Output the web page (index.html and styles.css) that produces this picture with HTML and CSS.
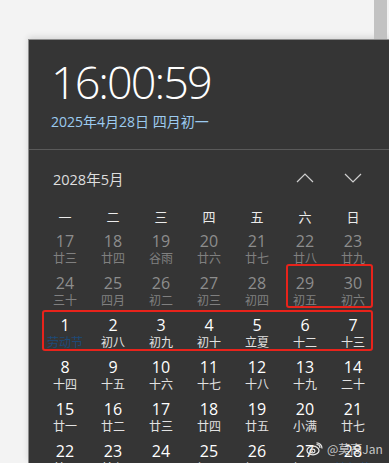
FILE: index.html
```html
<!DOCTYPE html>
<html lang="zh-CN">
<head>
<meta charset="utf-8">
<title>日历</title>
<link rel="stylesheet" href="styles.css">
</head>
<body>
<div class="topbar"><div class="scroll"></div></div>
<div class="panel">
  <div class="clock">
    <div class="time">16:00:59</div>
    <div class="date">2025年4月28日 四月初一</div>
  </div>
  <div class="cal">
    <div class="cal-head">
      <div class="month">2028年5月</div>
      <div class="navs">
        <svg class="nav" width="18" height="10" viewBox="0 0 18 10"><path d="M1 9 L9 1 L17 9" fill="none" stroke="#cfcfcf" stroke-width="1.2"/></svg>
        <svg class="nav" width="18" height="10" viewBox="0 0 18 10"><path d="M1 1 L9 9 L17 1" fill="none" stroke="#cfcfcf" stroke-width="1.2"/></svg>
      </div>
    </div>
    <div class="grid">
      <div class="wd">一</div><div class="wd">二</div><div class="wd">三</div><div class="wd">四</div><div class="wd">五</div><div class="wd">六</div><div class="wd">日</div>

      <div class="day dim"><span class="n">17</span><span class="l">廿三</span></div>
      <div class="day dim"><span class="n">18</span><span class="l">廿四</span></div>
      <div class="day dim"><span class="n">19</span><span class="l">谷雨</span></div>
      <div class="day dim"><span class="n">20</span><span class="l">廿六</span></div>
      <div class="day dim"><span class="n">21</span><span class="l">廿七</span></div>
      <div class="day dim"><span class="n">22</span><span class="l">廿八</span></div>
      <div class="day dim"><span class="n">23</span><span class="l">廿九</span></div>

      <div class="day dim"><span class="n">24</span><span class="l">三十</span></div>
      <div class="day dim"><span class="n">25</span><span class="l">四月</span></div>
      <div class="day dim"><span class="n">26</span><span class="l">初二</span></div>
      <div class="day dim"><span class="n">27</span><span class="l">初三</span></div>
      <div class="day dim"><span class="n">28</span><span class="l">初四</span></div>
      <div class="day dim"><span class="n">29</span><span class="l">初五</span></div>
      <div class="day dim"><span class="n">30</span><span class="l">初六</span></div>

      <div class="day"><span class="n">1</span><span class="l fest">劳动节</span></div>
      <div class="day"><span class="n">2</span><span class="l">初八</span></div>
      <div class="day"><span class="n">3</span><span class="l">初九</span></div>
      <div class="day"><span class="n">4</span><span class="l">初十</span></div>
      <div class="day"><span class="n">5</span><span class="l">立夏</span></div>
      <div class="day"><span class="n">6</span><span class="l">十二</span></div>
      <div class="day"><span class="n">7</span><span class="l">十三</span></div>

      <div class="day"><span class="n">8</span><span class="l">十四</span></div>
      <div class="day"><span class="n">9</span><span class="l">十五</span></div>
      <div class="day"><span class="n">10</span><span class="l">十六</span></div>
      <div class="day"><span class="n">11</span><span class="l">十七</span></div>
      <div class="day"><span class="n">12</span><span class="l">十八</span></div>
      <div class="day"><span class="n">13</span><span class="l">十九</span></div>
      <div class="day"><span class="n">14</span><span class="l">二十</span></div>

      <div class="day"><span class="n">15</span><span class="l">廿一</span></div>
      <div class="day"><span class="n">16</span><span class="l">廿二</span></div>
      <div class="day"><span class="n">17</span><span class="l">廿三</span></div>
      <div class="day"><span class="n">18</span><span class="l">廿四</span></div>
      <div class="day"><span class="n">19</span><span class="l">廿五</span></div>
      <div class="day"><span class="n">20</span><span class="l">小满</span></div>
      <div class="day"><span class="n">21</span><span class="l">廿七</span></div>

      <div class="day"><span class="n">22</span><span class="l">廿八</span></div>
      <div class="day"><span class="n">23</span><span class="l">廿九</span></div>
      <div class="day"><span class="n">24</span><span class="l">五月</span></div>
      <div class="day"><span class="n">25</span><span class="l">初二</span></div>
      <div class="day"><span class="n">26</span><span class="l">初三</span></div>
      <div class="day"><span class="n">27</span><span class="l">初四</span></div>
      <div class="day"><span class="n">28</span><span class="l fest">端午节</span></div>

      <div class="mark mark-a"></div>
      <div class="mark mark-b"></div>
    </div>
  </div>
</div>
<div class="watermark">
  <svg width="17" height="14" viewBox="0 0 17 14"><ellipse cx="7" cy="8.5" rx="6" ry="4.3" fill="none" stroke="#e8e8e8" stroke-width="1.3"/><ellipse cx="6.5" cy="9" rx="2.4" ry="1.9" fill="none" stroke="#e8e8e8" stroke-width="1.1"/><circle cx="6.2" cy="9.3" r="0.8" fill="#e8e8e8"/><path d="M10.5 2.5 A3.5 3.5 0 0 1 14 6" fill="none" stroke="#e8e8e8" stroke-width="1.2"/><path d="M10.5 0.8 A5.5 5.5 0 0 1 16 6.5" fill="none" stroke="#e8e8e8" stroke-width="1.2"/></svg>
  <span>@莫高Jan</span>
</div>
</body>
</html>
```

FILE: styles.css
```css
html, body {
  margin: 0;
  padding: 0;
}
body {
  width: 389px;
  height: 463px;
  overflow: hidden;
  background: #f3f3f3;
  font-family: "Segoe UI", "Open Sans", "Noto Sans CJK SC", sans-serif;
  position: relative;
}
.topbar {
  height: 39px;
  display: flex;
  justify-content: flex-end;
}
.scroll {
  width: 13px;
  margin-right: 2px;
  background: #c2c2c2;
}
.panel {
  margin-left: 28px;
  width: 360px;
  height: 423px;
  overflow: hidden;
  background: #353535;
  border-top: 1px solid #8c8c8c;
  border-left: 1px solid #8c8c8c;
  box-shadow: 0 -2px 6px rgba(0,0,0,0.12);
}
.clock {
  padding: 15px 0 18px 22px;
  border-bottom: 1px solid #5a5a5a;
}
.time {
  font-family: "Open Sans", sans-serif;
  font-weight: 300;
  font-size: 45px;
  line-height: 54px;
  color: #ffffff;
  letter-spacing: -2px;
}
.date {
  font-size: 14px;
  line-height: 18px;
  color: #9ccbf0;
  margin-top: 4px;
}
.cal-head {
  display: flex;
  justify-content: space-between;
  align-items: center;
  padding: 17px 27px 0 24px;
  height: 22px;
}
.month {
  font-size: 14.5px;
  color: #dedede;
}
.navs {
  display: flex;
  gap: 30px;
}
.grid {
  position: relative;
  display: grid;
  grid-template-columns: repeat(7, 48px);
  grid-template-rows: 26px;
  grid-auto-rows: 42px;
  margin: 14px 0 0 12px;
}
.grid .wd {
  padding-top: 5px;
  text-align: center;
  font-family: "Noto Sans CJK SC", sans-serif;
  font-size: 13px;
  line-height: 18px;
  color: #ececec;
}
.day {
  display: flex;
  flex-direction: column;
  align-items: center;
  padding-top: 3px;
}
.n {
  font-size: 16px;
  line-height: 18px;
  color: #ffffff;
}
.l {
  font-family: "Noto Sans CJK SC", sans-serif;
  font-size: 12px;
  line-height: 15px;
  color: #e2e2e2;
}
.dim .n { color: #8d8d8d; }
.dim .l { color: #808080; }
.l.fest { color: #1d4a78; }
.mark {
  position: absolute;
  border: 2px solid #e8231b;
  border-radius: 3px;
}
.mark-a {
  left: 245px;
  top: 61px;
  width: 83px;
  height: 40px;
}
.mark-b {
  left: 1px;
  top: 107px;
  width: 327px;
  height: 37px;
}
.watermark {
  position: absolute;
  left: 306px;
  top: 440px;
  display: flex;
  align-items: center;
  gap: 4px;
  font-family: "Noto Sans CJK SC", sans-serif;
  font-size: 12px;
  color: rgba(235,235,235,0.8);
}
```
